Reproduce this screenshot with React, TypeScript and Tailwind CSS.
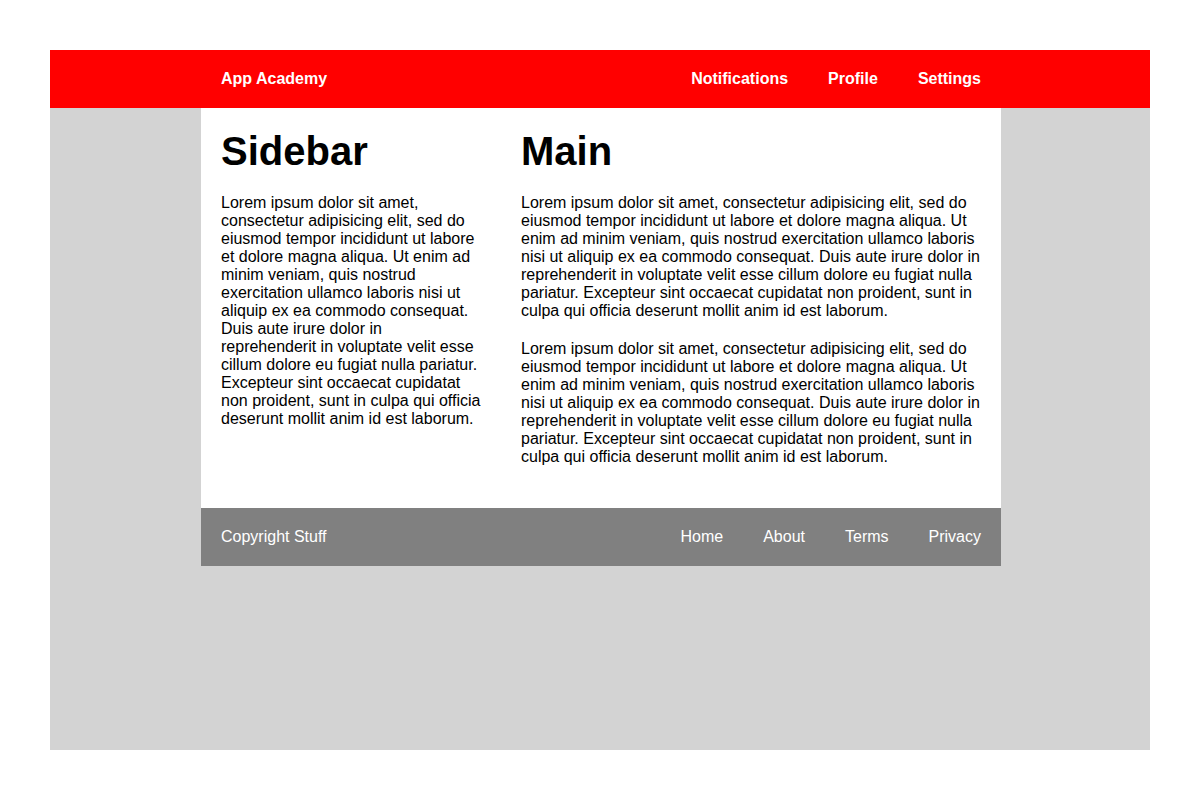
const lorem =
  "Lorem ipsum dolor sit amet, consectetur adipisicing elit, sed do eiusmod tempor incididunt ut labore et dolore magna aliqua. Ut enim ad minim veniam, quis nostrud exercitation ullamco laboris nisi ut aliquip ex ea commodo consequat. Duis aute irure dolor in reprehenderit in voluptate velit esse cillum dolore eu fugiat nulla pariatur. Excepteur sint occaecat cupidatat non proident, sunt in culpa qui officia deserunt mollit anim id est laborum.";

export default function App() {
  return (
    <div className="bg-white p-[50px] font-['Liberation_Sans',Arial,sans-serif] text-black">
      <div className="h-[700px] bg-[#d3d3d3]">
        {/* Header */}
        <header className="bg-[#ff0000] text-white">
          <div className="ml-[151px] flex w-[800px] items-center justify-between p-5 text-base font-bold leading-[18px]">
            <span>App Academy</span>
            <nav className="flex gap-10">
              <span>Notifications</span>
              <span>Profile</span>
              <span>Settings</span>
            </nav>
          </div>
        </header>

        {/* Content */}
        <div className="ml-[151px] flex w-[800px] bg-white text-base leading-[18px]">
          <aside className="w-[300px] p-5">
            <h1 className="mb-5 text-[40px] font-bold leading-[46px]">Sidebar</h1>
            <p className="mb-5">{lorem}</p>
          </aside>
          <main className="w-[500px] px-5 pt-5 pb-[22px]">
            <h1 className="mb-5 text-[40px] font-bold leading-[46px]">Main</h1>
            <p className="mb-5">{lorem}</p>
            <p className="mb-5">{lorem}</p>
          </main>
        </div>

        {/* Footer */}
        <footer className="ml-[151px] flex w-[800px] items-center justify-between bg-[#808080] p-5 text-base leading-[18px] text-white">
          <span>Copyright Stuff</span>
          <nav className="flex gap-10">
            <span>Home</span>
            <span>About</span>
            <span>Terms</span>
            <span>Privacy</span>
          </nav>
        </footer>
      </div>
    </div>
  );
}
